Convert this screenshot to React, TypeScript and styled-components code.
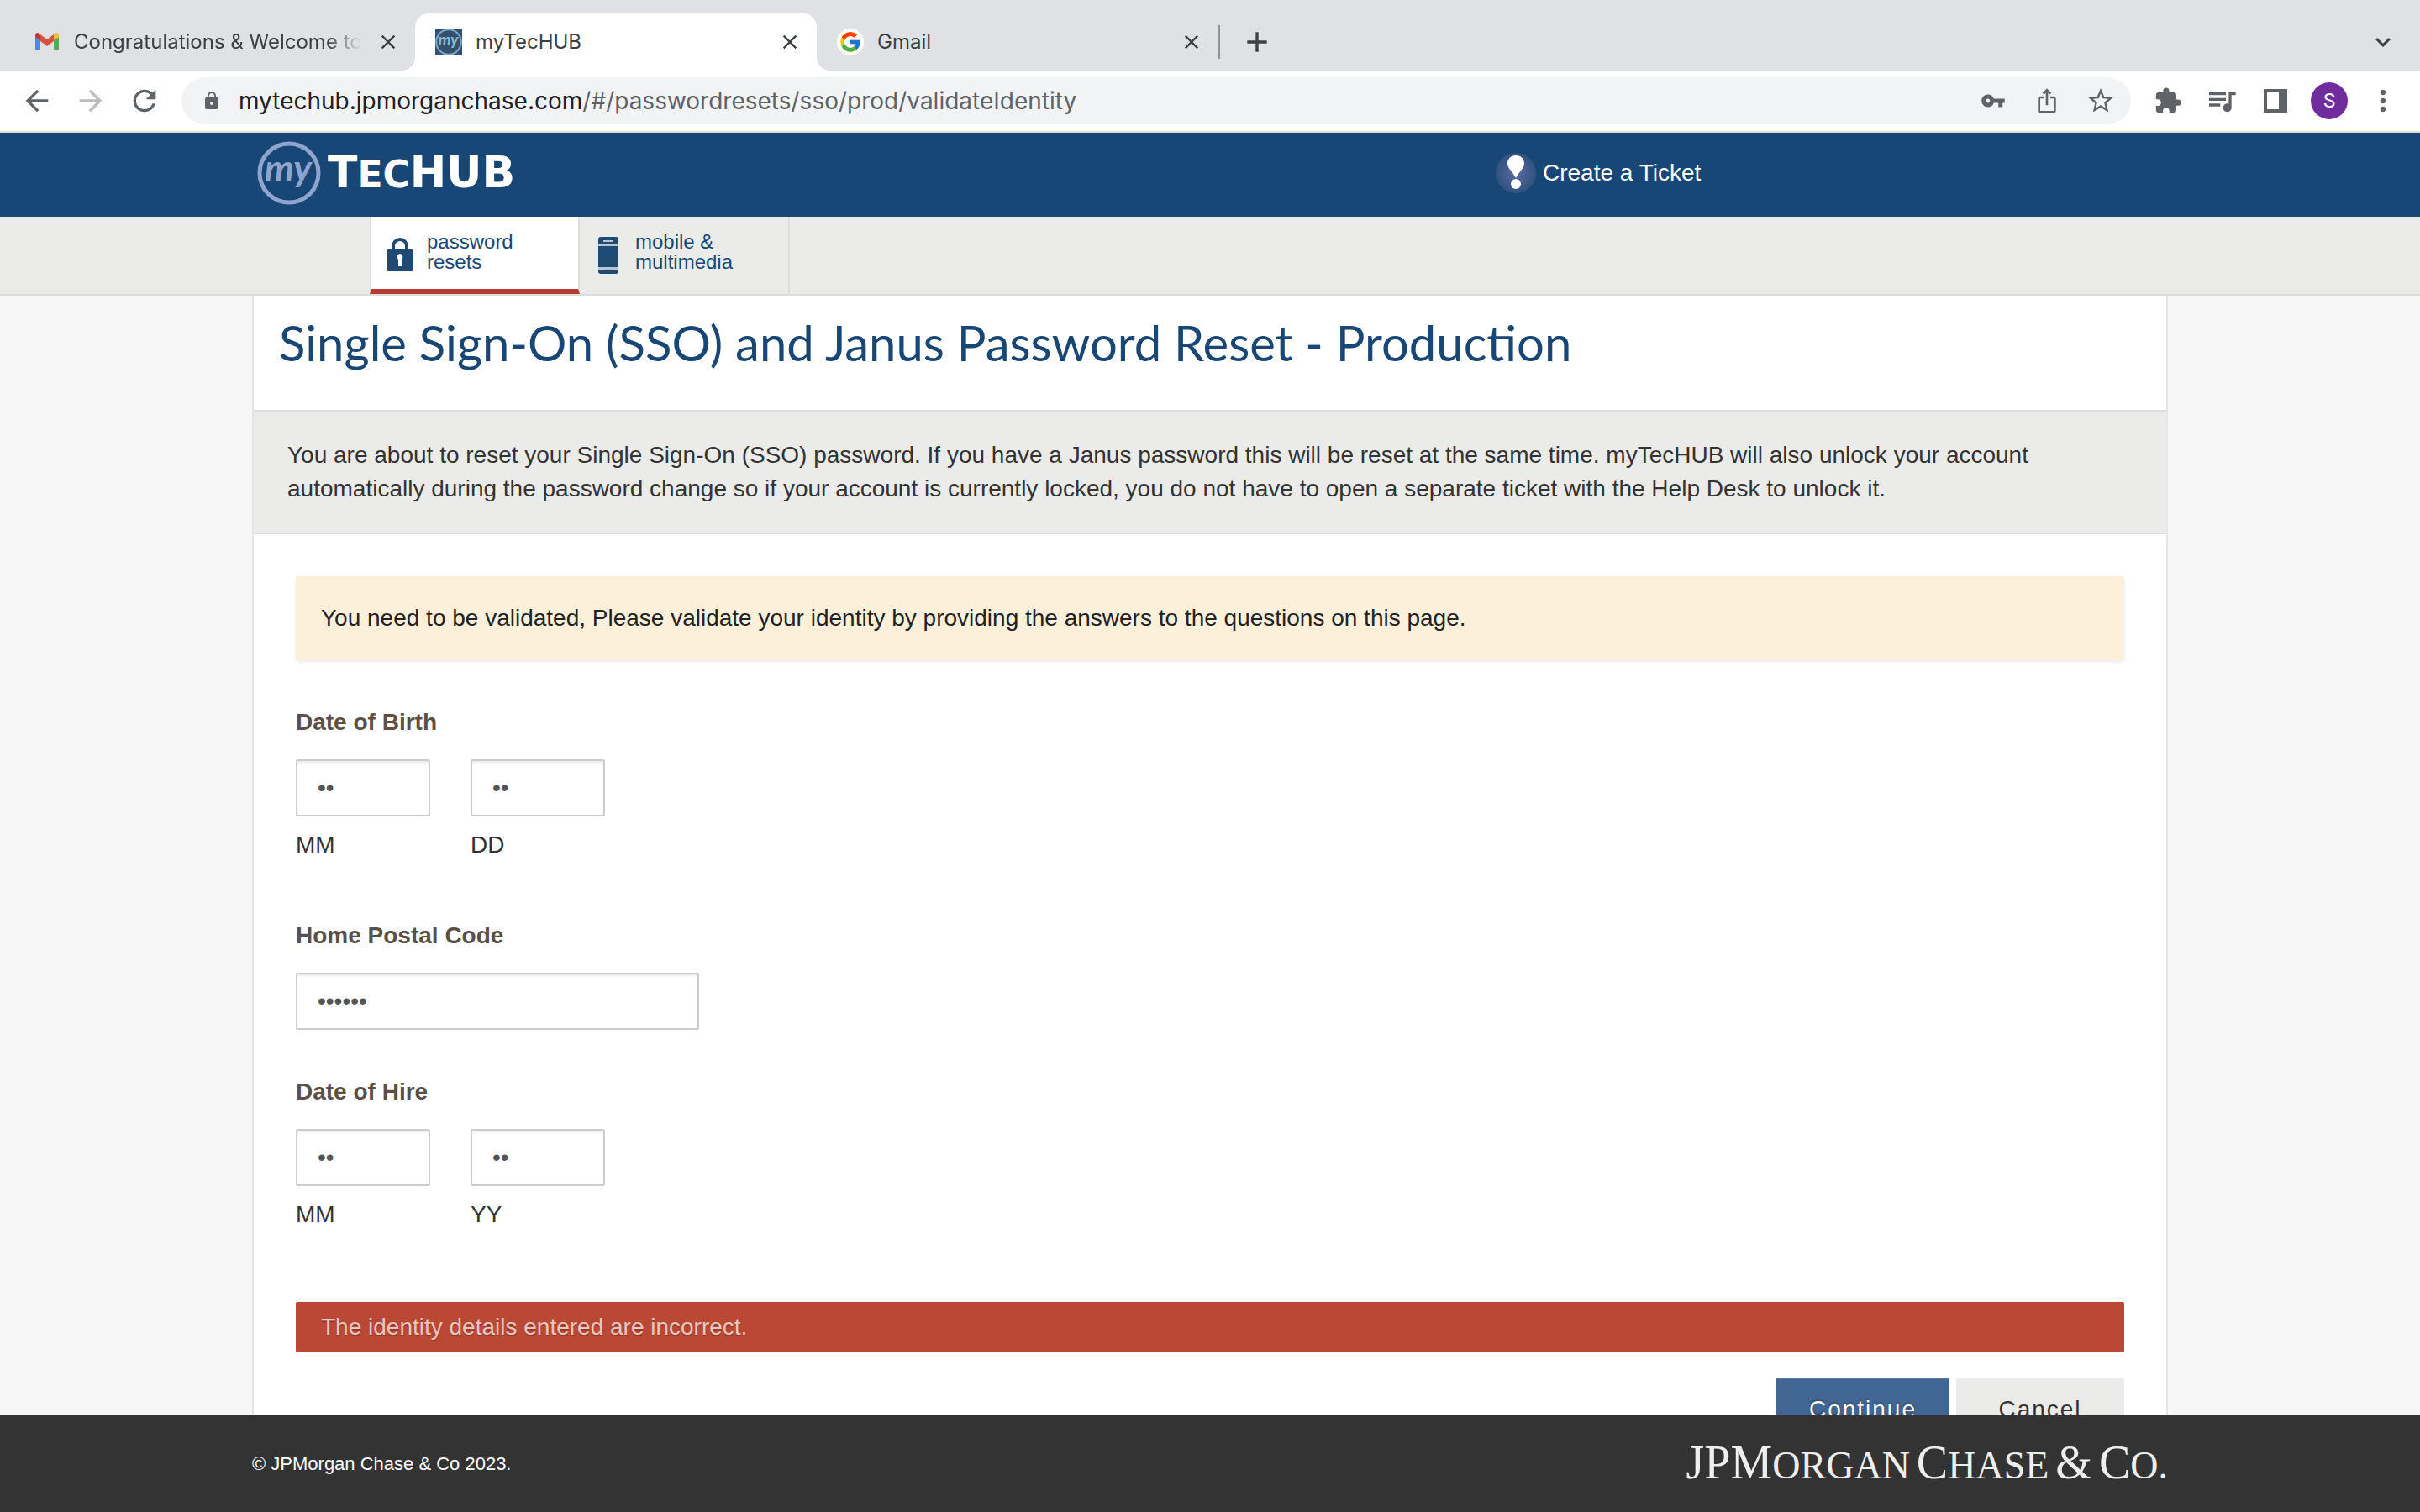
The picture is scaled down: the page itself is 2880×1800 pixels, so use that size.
import React from "react";
import styled, { createGlobalStyle, css } from "styled-components";
import {
  MdAdd,
  MdArrowBack,
  MdArrowForward,
  MdClose,
  MdExpandMore,
  MdExtension,
  MdIosShare,
  MdLock,
  MdMoreVert,
  MdQueueMusic,
  MdRefresh,
  MdStarBorder,
  MdVpnKey,
} from "react-icons/md";
import { FcGoogle } from "react-icons/fc";

const navy = "#194775";
const line = "#dddddd";
const panel = "#ebebe9";
const uiFont = `Inter, Roboto, sans-serif`;
const bodyFont = `"Liberation Sans", Arial, sans-serif`;

const GlobalStyle = createGlobalStyle`
  *, *::before, *::after { box-sizing: border-box; }
  body { margin: 0; background: #f6f6f6; font-family: ${bodyFont}; font-size: 28px; line-height: 40px; color: #333333; }
  button, input { font: inherit; }
  h1, p { margin: 0; }
`;

const Page = styled.div`
  display: flex;
  flex-direction: column;
  height: 100vh;
  overflow: hidden;
`;

/* Browser frame */

const TabStrip = styled.div`
  display: flex;
  align-items: flex-end;
  flex: none;
  height: 84px;
  padding: 0 12px 0 16px;
  background: #dfe1e5;
  font-family: ${uiFont};
  font-size: 24px;
  line-height: 32px;
  color: #3c4043;
`;

const foot = css`
  content: "";
  position: absolute;
  bottom: 0;
  width: 16px;
  height: 16px;
`;

const Tab = styled.div<{ $active?: boolean }>`
  position: relative;
  display: flex;
  align-items: center;
  gap: 16px;
  width: 478px;
  height: 68px;
  padding: 0 16px 0 24px;
  border-radius: 16px 16px 0 0;
  ${({ $active }) =>
    $active &&
    css`
      background: #ffffff;
      &::before {
        ${foot}
        right: 100%;
        background: radial-gradient(circle at 0 0, transparent 16px, #ffffff 16px);
      }
      &::after {
        ${foot}
        left: 100%;
        background: radial-gradient(circle at 100% 0, transparent 16px, #ffffff 16px);
      }
    `}
`;

const TabTitle = styled.span<{ $faded?: boolean }>`
  flex: 1;
  min-width: 0;
  overflow: hidden;
  white-space: nowrap;
  ${({ $faded }) =>
    $faded &&
    css`
      mask-image: linear-gradient(to right, #000 88%, transparent);
    `}
`;

const PlainButton = styled.button<{ $width: number }>`
  display: flex;
  align-items: center;
  justify-content: center;
  flex: none;
  width: ${({ $width }) => $width}px;
  height: 44px;
  padding: 0;
  border: 0;
  background: none;
  color: inherit;
`;

const TabTools = styled.div`
  display: flex;
  align-items: center;
  flex: 1;
  height: 68px;
`;

const TabDivider = styled.span`
  width: 2px;
  height: 40px;
  margin-right: 12px;
  background: #909499;
`;

const Spacer = styled.span`
  flex: 1;
`;

const Toolbar = styled.div`
  display: flex;
  align-items: center;
  flex: none;
  height: 74px;
  padding: 0 12px;
  border-bottom: 2px solid ${line};
  background: #ffffff;
  color: #5f6368;
`;

const Omnibox = styled.div`
  display: flex;
  align-items: center;
  flex: 1;
  height: 56px;
  margin: 0 12px;
  padding: 0 4px 0 24px;
  border-radius: 28px;
  background: #f1f3f4;
`;

const Address = styled.span`
  flex: 1;
  margin-left: 20px;
  font-family: ${uiFont};
  font-size: 28px;
  white-space: nowrap;
`;

const Host = styled.span`
  color: #202124;
`;

const Avatar = styled.span`
  display: grid;
  place-items: center;
  width: 44px;
  height: 44px;
  border-radius: 50%;
  background: #702c9c;
  color: #ffffff;
  font-family: Roboto, sans-serif;
  font-size: 24px;
`;

/* Site header */

const Header = styled.header`
  flex: none;
  background: ${navy};
`;

const Wrap = styled.div`
  width: 100%;
  max-width: 2280px;
  margin: 0 auto;
`;

const HeaderRow = styled(Wrap)`
  display: grid;
  grid-template-columns: 1480px 1fr;
  align-items: center;
  height: 100px;
  padding-bottom: 4px;
`;

const Brand = styled.a`
  display: flex;
  align-items: center;
  gap: 8px;
  padding: 0 6px;
  color: #ffffff;
  text-decoration: none;
`;

const BrandName = styled.span`
  font-family: "DejaVu Sans", sans-serif;
  font-weight: 700;
  font-size: 52px;
  line-height: 52px;
`;

const BrandSmall = styled.span`
  font-size: 44px;
`;

const Ticket = styled.a`
  display: flex;
  align-items: center;
  gap: 8px;
  color: #ffffff;
  text-decoration: none;
`;

const Nav = styled.nav`
  flex: none;
  border-bottom: 2px solid ${line};
  background: ${panel};
`;

const NavRow = styled(Wrap)`
  display: flex;
  padding-left: 140px;
`;

const NavItem = styled.a<{ $active?: boolean }>`
  display: flex;
  align-items: center;
  gap: 16px;
  width: 250px;
  height: 92px;
  padding: 0 0 8px 18px;
  border-right: 2px solid ${line};
  color: ${navy};
  font-size: 24px;
  line-height: 24px;
  text-decoration: none;
  ${({ $active }) =>
    $active &&
    css`
      padding-bottom: 2px;
      border-left: 2px solid ${line};
      border-bottom: 6px solid #b73c31;
      background: #ffffff;
    `}
`;

const NavIcon = styled.span`
  display: flex;
  justify-content: center;
  width: 32px;
  padding-top: 8px;
`;

/* Main content */

const Main = styled.main`
  flex: 1;
  min-height: 0;
  overflow: hidden;
`;

const Sheet = styled(Wrap)`
  min-height: 100%;
  border: 2px solid #e6e6e6;
  border-width: 0 2px;
  background: #ffffff;
`;

const Title = styled.h1`
  padding: 16px 30px 40px;
  color: ${navy};
  font-family: Lato, "Open Sans", sans-serif;
  font-weight: 400;
  font-size: 58px;
  line-height: 80px;
`;

const Intro = styled.p`
  padding: 32px 120px 32px 40px;
  border: 2px solid ${line};
  border-width: 2px 0;
  background: ${panel};
`;

const Form = styled.form`
  padding: 50px;
`;

const Notice = styled.p`
  padding: 30px;
  border-radius: 2px;
  background: #fcf0da;
  box-shadow: 0 2px 4px rgba(0, 0, 0, 0.08);
  color: #222222;
`;

const Field = styled.div`
  display: flex;
  flex-direction: column;
  align-items: flex-start;
  gap: 24px;
  margin-top: 54px;
`;

const Caption = styled.label`
  color: #5a5048;
  font-weight: 700;
`;

const Parts = styled.div`
  display: flex;
  gap: 48px;
  margin-bottom: 14px;
`;

const Part = styled.div`
  display: flex;
  flex-direction: column;
  gap: 14px;
`;

const Secret = styled.input<{ $wide?: boolean }>`
  width: ${({ $wide }) => ($wide ? 480 : 160)}px;
  height: 68px;
  padding: 0 24px;
  border: 2px solid #cccccc;
  border-radius: 2px;
  outline: 0;
  background: #ffffff;
  box-shadow: inset 0 2px 2px rgba(0, 0, 0, 0.08);
  color: #555555;
`;

const ErrorBar = styled.p`
  margin-top: 70px;
  padding: 10px 30px;
  border-radius: 2px;
  background: #b94834;
  color: #ecc5be;
  text-shadow: 0 2px 0 rgba(0, 0, 0, 0.2);
`;

const Actions = styled.div`
  display: flex;
  justify-content: flex-end;
  gap: 8px;
  margin-top: 30px;
`;

const Action = styled.button<{ $primary?: boolean }>`
  height: 76px;
  padding: 0 39px;
  border: 0;
  border-radius: 2px;
  background: ${panel};
  color: #333333;
  letter-spacing: 2px;
  min-width: 200px;
  ${({ $primary }) =>
    $primary &&
    css`
      background: #416693;
      box-shadow: inset 0 2px 0 #5578a2;
      color: #ffffff;
      text-shadow: 0 -2px 2px rgba(0, 0, 0, 0.25);
    `}
`;

const Footer = styled.footer`
  flex: none;
  background: #333333;
  color: #ffffff;
`;

const FooterRow = styled(Wrap)`
  display: flex;
  align-items: center;
  justify-content: space-between;
  height: 116px;
  padding-top: 2px;
  font-size: 22px;
`;

const Corporate = styled.span`
  display: flex;
  align-items: baseline;
  gap: 8px;
  color: #eeeeee;
  font-family: "Liberation Serif", serif;
  font-size: 56px;
`;

const CorporateSmall = styled.span`
  font-size: 46px;
`;

const GmailIcon = () => (
  <svg width="32" height="32" viewBox="0 0 32 32" aria-hidden="true">
    <path d="M2 8v16a2 2 0 0 0 2 2h4V13z" fill="#4f86ec" />
    <path d="M30 8v16a2 2 0 0 1-2 2h-4V13z" fill="#58a55c" />
    <path d="M24 8v6l6-4V8c0-3-3-4-5-2z" fill="#f1bd42" />
    <path d="M8 8v6l-6-4V8c0-3 3-4 5-2z" fill="#b53a2d" />
    <path d="M8 7l8 6 8-6v8l-8 6-8-6z" fill="#d85140" />
  </svg>
);

const GoogleBadge = styled.span`
  display: grid;
  place-items: center;
  width: 32px;
  height: 32px;
  border-radius: 50%;
  background: #ffffff;
`;

const MyBadge = ({ size, tile }: { size: number; tile?: boolean }) => (
  <svg width={size} height={size} viewBox="0 0 76 76" aria-hidden="true">
    {tile && <rect width="76" height="76" fill="#34506e" />}
    <circle cx="38" cy="38" r="35" fill="none" stroke={tile ? "#7da6c4" : "#8fa5cf"} strokeWidth="5" />
    <text
      x="37"
      y="48"
      textAnchor="middle"
      fill={tile ? "#8fb8d4" : "#8fa5cf"}
      fontFamily="Lato, sans-serif"
      fontStyle="italic"
      fontWeight="700"
      fontSize="44"
    >
      my
    </text>
  </svg>
);

const AlertIcon = () => (
  <svg width="48" height="48" viewBox="0 0 48 48" aria-hidden="true">
    <defs>
      <radialGradient id="glow">
        <stop offset="0" stopColor="#5d6ba2" />
        <stop offset="1" stopColor="#2f5280" />
      </radialGradient>
    </defs>
    <circle cx="24" cy="24" r="24" fill="url(#glow)" />
    <path d="M24 3c6 0 10 4 10 10 0 5-6 9-10 17-4-8-10-12-10-17 0-6 4-10 10-10z" fill="#ffffff" />
    <circle cx="24" cy="37" r="6" fill="#ffffff" />
  </svg>
);

const PadlockIcon = () => (
  <svg width="32" height="48" viewBox="0 0 32 48" aria-hidden="true">
    <path d="M8 17v-4a8 8 0 0 1 16 0v8H8z" fill="none" stroke="#1e4a74" strokeWidth="4" />
    <rect y="17" width="32" height="26" rx="2" fill="#1e4a74" />
    <path d="M16 22a4 4 0 0 1 2 7v8h-4v-8a4 4 0 0 1 2-7z" fill="#ffffff" />
  </svg>
);

const PhoneIcon = () => (
  <svg width="24" height="44" viewBox="0 0 24 44" aria-hidden="true">
    <path d="M3 0h18a3 3 0 0 1 3 3v5H0V3a3 3 0 0 1 3-3zM0 11h24v25H0zM0 39h24v2a3 3 0 0 1-3 3H3a3 3 0 0 1-3-3z" fill="#1e4a74" />
    <rect y="8" width="24" height="3" fill="#b9c6d1" />
    <rect y="36" width="24" height="3" fill="#b9c6d1" />
    <rect x="6" y="4" width="12" height="2" fill="#b9c6d1" />
  </svg>
);

const SidePanelIcon = () => (
  <svg width="28" height="28" viewBox="0 0 28 28" aria-hidden="true">
    <path d="M0 0h28v28H0zM4 4v20h14V4z" fill="currentColor" fillRule="evenodd" />
  </svg>
);

type PairProps = { id: string; title: string; parts: string[] };

const DatePair = ({ id, title, parts }: PairProps) => (
  <Field role="group" aria-labelledby={id}>
    <Caption as="span" id={id}>
      {title}
    </Caption>
    <Parts>
      {parts.map((part) => (
        <Part key={part}>
          <Secret type="password" id={`${id}-${part}`} defaultValue="00" />
          <label htmlFor={`${id}-${part}`}>{part}</label>
        </Part>
      ))}
    </Parts>
  </Field>
);

const toolIcons = [
  { name: "Extensions", icon: <MdExtension size={34} /> },
  { name: "Media controls", icon: <MdQueueMusic size={40} /> },
  { name: "Side panel", icon: <SidePanelIcon /> },
  { name: "Profile", icon: <Avatar>S</Avatar> },
  { name: "Menu", icon: <MdMoreVert size={40} /> },
];

const CloseTab = () => (
  <PlainButton $width={32} aria-label="Close tab">
    <MdClose size={28} />
  </PlainButton>
);

export default function App() {
  return (
    <Page>
      <GlobalStyle />
      <TabStrip>
        <Tab>
          <GmailIcon />
          <TabTitle $faded>Congratulations &amp; Welcome to</TabTitle>
          <CloseTab />
        </Tab>
        <Tab $active>
          <MyBadge size={32} tile />
          <TabTitle>myTecHUB</TabTitle>
          <CloseTab />
        </Tab>
        <Tab>
          <GoogleBadge>
            <FcGoogle size={28} />
          </GoogleBadge>
          <TabTitle>Gmail</TabTitle>
          <CloseTab />
        </Tab>
        <TabTools>
          <TabDivider />
          <PlainButton $width={64} aria-label="New tab">
            <MdAdd size={40} />
          </PlainButton>
          <Spacer />
          <PlainButton $width={64} aria-label="Search tabs">
            <MdExpandMore size={36} />
          </PlainButton>
        </TabTools>
      </TabStrip>
      <Toolbar>
        <PlainButton $width={64} aria-label="Back">
          <MdArrowBack size={40} />
        </PlainButton>
        <PlainButton $width={64} aria-label="Forward" disabled>
          <MdArrowForward size={40} color="#babcbe" />
        </PlainButton>
        <PlainButton $width={64} aria-label="Reload">
          <MdRefresh size={40} />
        </PlainButton>
        <Omnibox>
          <MdLock size={24} />
          <Address>
            <Host>mytechub.jpmorganchase.com</Host>/#/passwordresets/sso/prod/validateIdentity
          </Address>
          <PlainButton $width={64} aria-label="Passwords">
            <MdVpnKey size={30} />
          </PlainButton>
          <PlainButton $width={64} aria-label="Share">
            <MdIosShare size={32} />
          </PlainButton>
          <PlainButton $width={64} aria-label="Bookmark">
            <MdStarBorder size={36} />
          </PlainButton>
        </Omnibox>
        {toolIcons.map(({ name, icon }) => (
          <PlainButton key={name} $width={64} aria-label={name}>
            {icon}
          </PlainButton>
        ))}
      </Toolbar>

      <Header>
        <HeaderRow>
          <Brand href="#home">
            <MyBadge size={76} />
            <BrandName>
              T<BrandSmall>EC</BrandSmall>HUB
            </BrandName>
          </Brand>
          <Ticket href="#ticket">
            <AlertIcon />
            Create a Ticket
          </Ticket>
        </HeaderRow>
      </Header>
      <Nav>
        <NavRow>
          <NavItem href="#password" $active>
            <NavIcon>
              <PadlockIcon />
            </NavIcon>
            <span>
              password
              <br />
              resets
            </span>
          </NavItem>
          <NavItem href="#mobile">
            <NavIcon>
              <PhoneIcon />
            </NavIcon>
            <span>
              mobile &amp;
              <br />
              multimedia
            </span>
          </NavItem>
        </NavRow>
      </Nav>

      <Main>
        <Sheet>
          <Title>Single Sign-On (SSO) and Janus Password Reset - Production</Title>
          <Intro>
            You are about to reset your Single Sign-On (SSO) password. If you have a Janus password this will be reset
            at the same time. myTecHUB will also unlock your account automatically during the password change so if your
            account is currently locked, you do not have to open a separate ticket with the Help Desk to unlock it.
          </Intro>
          <Form>
            <Notice>
              You need to be validated, Please validate your identity by providing the answers to the questions on this
              page.
            </Notice>
            <DatePair id="birth" title="Date of Birth" parts={["MM", "DD"]} />
            <Field>
              <Caption htmlFor="postal">Home Postal Code</Caption>
              <Secret $wide type="password" id="postal" defaultValue="000000" />
            </Field>
            <DatePair id="hire" title="Date of Hire" parts={["MM", "YY"]} />
            <ErrorBar role="alert">The identity details entered are incorrect.</ErrorBar>
            <Actions>
              <Action type="button" $primary>
                Continue
              </Action>
              <Action type="button">Cancel</Action>
            </Actions>
          </Form>
        </Sheet>
      </Main>

      <Footer>
        <FooterRow>
          <span>© JPMorgan Chase &amp; Co 2023.</span>
          <Corporate>
            <span>
              JPM<CorporateSmall>ORGAN</CorporateSmall>
            </span>
            <span>
              C<CorporateSmall>HASE</CorporateSmall>
            </span>
            <span>&amp;</span>
            <span>
              C<CorporateSmall>O.</CorporateSmall>
            </span>
          </Corporate>
        </FooterRow>
      </Footer>
    </Page>
  );
}
